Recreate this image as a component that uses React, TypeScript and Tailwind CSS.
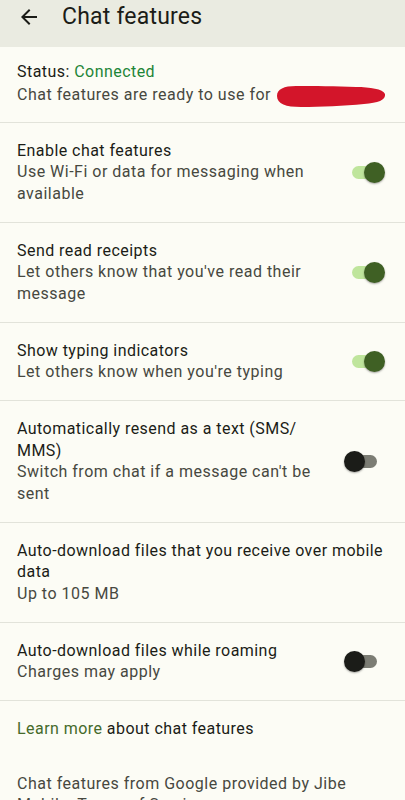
import React from "react";

function Toggle({ on }: { on: boolean }) {
  return (
    <div
      className={
        "relative w-[25px] h-[13px] rounded-full shrink-0 " +
        (on ? "bg-[#bfe59c]" : "bg-[#7c7d74]")
      }
    >
      <div
        className={
          "absolute top-[-4px] w-[21px] h-[21px] rounded-full shadow-[0_1px_2px_rgba(0,0,0,0.35)] " +
          (on ? "left-[12px] bg-[#3f6024]" : "left-[-8px] bg-[#1b1c18]")
        }
      />
    </div>
  );
}

function Row({
  title,
  sub,
  toggle,
}: {
  title: React.ReactNode;
  sub: string;
  toggle?: boolean;
}) {
  const hasToggle = toggle !== undefined;
  return (
    <div
      className={
        "flex items-center border-b border-[#e2e3da] pl-[17px] py-[17.25px] " +
        (hasToggle ? "pr-[28px] gap-[22px]" : "pr-[17px]")
      }
    >
      <div className="flex-1 min-w-0">
        <div className="text-[16px] leading-[21.5px] tracking-[0.45px] text-[#1b1c17]">{title}</div>
        <div className="text-[16px] leading-[21.5px] tracking-[0.5px] text-[#47483f]">{sub}</div>
      </div>
      {hasToggle && <Toggle on={toggle!} />}
    </div>
  );
}

export default function App() {
  return (
    <div
      className="w-[405px] h-[800px] overflow-hidden bg-[#fcfcf5]"
      style={{ fontFamily: "Roboto, 'Noto Sans', sans-serif" }}
    >
      <div className="h-[47px] bg-[#eaebe1]">
        <div className="h-[33px] flex items-center">
          <svg
            className="ml-[17px]"
            width="24"
            height="24"
            viewBox="0 0 24 24"
            fill="#1b1c17"
          >
            <path d="M20 11H7.83l5.59-5.59L12 4l-8 8 8 8 1.41-1.41L7.83 13H20v-2z" />
          </svg>
          <div className="ml-[21px] text-[23px] tracking-[0.2px] text-[#1b1c17] leading-none">
            Chat features
          </div>
        </div>
      </div>

      <div className="border-b border-[#e2e3da] px-[17px] pt-[14px] pb-[15px]">
        <div className="h-[21.5px] text-[16px] leading-[21.5px] tracking-[0.45px] text-[#1b1c17]">
          Status: <span className="text-[#1e8538]">Connected</span>
        </div>
        <div className="h-[24px] flex items-center text-[16px] leading-[21.5px] tracking-[0.5px] text-[#47483f]">
          <span>Chat features are ready to use for</span>
          <svg width="110" height="26" viewBox="0 0 110 26" className="ml-[5px] mt-[2px] shrink-0">
            <path
              d="M1 13 C1 6 8 3 20 3 C38 3 60 3 80 4 C94 4 107 6 109 11 C110 17 102 20 88 21 C68 23 45 24 25 24 C10 24 1 21 1 13 Z"
              fill="#d3152a"
            />
          </svg>
        </div>
      </div>

      <Row
        title="Enable chat features"
        sub="Use Wi-Fi or data for messaging when available"
        toggle={true}
      />
      <Row
        title="Send read receipts"
        sub="Let others know that you've read their message"
        toggle={true}
      />
      <Row
        title="Show typing indicators"
        sub="Let others know when you're typing"
        toggle={true}
      />
      <Row
        title={
          <>
            Automatically resend as a text (SMS/<wbr />MMS)
          </>
        }
        sub="Switch from chat if a message can't be sent"
        toggle={false}
      />
      <Row
        title="Auto-download files that you receive over mobile data"
        sub="Up to 105 MB"
      />
      <Row
        title="Auto-download files while roaming"
        sub="Charges may apply"
        toggle={false}
      />

      <div className="px-[17px] pt-[17px] pb-[17px] text-[16px] leading-[21.5px] tracking-[0.45px] text-[#1b1c17]">
        <span className="text-[#456a2a]">Learn more</span> about chat features
      </div>
      <div className="px-[17px] pt-[16px] text-[16px] leading-[21.5px] tracking-[0.5px] text-[#47483f]">
        Chat features from Google provided by Jibe Mobile. Terms of Service
      </div>
    </div>
  );
}
